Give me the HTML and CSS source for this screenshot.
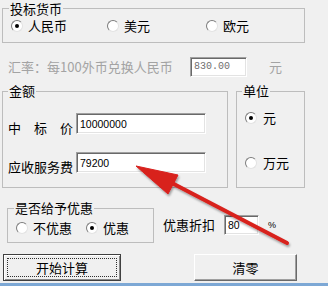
FILE: index.html
```html
<!DOCTYPE html>
<html>
<head>
<meta charset="utf-8">
<link rel="stylesheet" href="styles.css">
</head>
<body>
<div class="dlg">
  <fieldset class="grp cur">
    <legend>投标货币</legend>
    <div class="radios">
      <div class="opt"><span class="radio on"></span>人民币</div>
      <div class="opt"><span class="radio"></span>美元</div>
      <div class="opt"><span class="radio"></span>欧元</div>
    </div>
  </fieldset>

  <div class="rate">
    <span class="rate-lbl">汇率：每100外币兑换人民币</span>
    <span class="box rate-box">830.00</span>
    <span class="rate-unit">元</span>
  </div>

  <div class="mid">
    <fieldset class="grp amt">
      <legend>金额</legend>
      <div class="field f1"><span class="lbl spaced"><span>中</span><span>标</span><span>价</span></span><span class="box num amt-box">10000000</span></div>
      <div class="field f2"><span class="lbl">应收服务费</span><span class="box num amt-box">79200</span></div>
    </fieldset>
    <fieldset class="grp unit">
      <legend>单位</legend>
      <div class="opt u1"><span class="radio on"></span>元</div>
      <div class="opt u2"><span class="radio"></span>万元</div>
    </fieldset>
  </div>

  <div class="disc-row">
    <fieldset class="grp disc">
      <legend>是否给予优惠</legend>
      <div class="radios">
        <div class="opt"><span class="radio"></span>不优惠</div>
        <div class="opt"><span class="radio on"></span>优惠</div>
      </div>
    </fieldset>
    <div class="disc-ctrl">
      <span class="disc-lbl">优惠折扣</span>
      <span class="box num disc-box">80</span>
      <span class="pct">%</span>
    </div>
  </div>

  <div class="btns">
    <button class="btn def"><span class="focus">开始计算</span></button>
    <button class="btn clr">清零</button>
  </div>
  <div class="taskbar"></div>
</div>

<svg class="arrow" width="328" height="286" viewBox="0 0 328 286">
  <defs>
    <filter id="sh" x="-20%" y="-20%" width="140%" height="140%">
      <feDropShadow dx="1" dy="2" stdDeviation="1.2" flood-color="#000" flood-opacity="0.35"/>
    </filter>
  </defs>
  <g filter="url(#sh)" fill="#d8201c" stroke="#d8201c">
    <line x1="170" y1="182" x2="287" y2="243" stroke-width="4" stroke-linecap="round"/>
    <polygon points="136,166 178,175 168,194" stroke-width="1" stroke-linejoin="round"/>
  </g>
</svg>
</body>
</html>
```

FILE: styles.css
```css
* { box-sizing: border-box; }
html, body { margin: 0; padding: 0; }
body {
  width: 328px;
  height: 286px;
  overflow: hidden;
  position: relative;
  background: #f0f0f0;
  color: #000;
  font: 13px/18px "Noto Sans CJK SC", "Noto Sans", sans-serif;
}
.dlg { display: flex; flex-direction: column; align-items: flex-start; }

.grp {
  margin: 0;
  padding: 0;
  min-width: 0;
  border: 1px solid #bdbdbd;
}
.grp legend { padding: 0 1px; line-height: 18px; font-size: 13px; }

.radios { display: flex; align-items: center; height: 18px; }
.opt { display: flex; align-items: center; gap: 5px; white-space: nowrap; height: 18px; }
.radio {
  flex: none;
  width: 12px;
  height: 12px;
  border-radius: 50%;
  background: #fff;
  border: 1px solid;
  border-color: #7c7c7c #e2e2e2 #e2e2e2 #7c7c7c;
  display: flex;
  align-items: center;
  justify-content: center;
}
.radio.on::after {
  content: "";
  width: 4px;
  height: 4px;
  border-radius: 50%;
  background: #000;
}

.box {
  display: flex;
  align-items: center;
  background: #fff;
  border: 1px solid;
  border-color: #a0a0a0 #fff #fff #a0a0a0;
  box-shadow: inset 1px 1px 0 #696969, inset -1px -1px 0 #e3e3e3;
  padding-left: 3px;
  white-space: nowrap;
}
.num { font: 10.5px/12px "Liberation Sans", Arial, sans-serif; }

/* currency group */
.cur { margin: 0 0 0 2px; width: 303px; padding-bottom: 7px; }
.cur legend { margin-left: 6px; line-height: 17px; }
.cur .radios { margin-left: 8px; }
.cur .opt:nth-child(1) { width: 96px; }
.cur .opt:nth-child(2) { width: 99px; }

/* exchange rate */
.rate { display: flex; align-items: center; height: 20px; margin-top: 14px; color: #a3a3a3; }
.rate-lbl { width: 190px; padding-left: 8px; }
.rate-box {
  width: 57px;
  height: 20px;
  color: #707070;
  font: 10px/12px "Liberation Mono", "Courier New", monospace;
}
.rate-unit { margin-left: 22px; }

/* amount + unit */
.mid { display: flex; gap: 8px; margin: 5px 0 0 2px; }
.amt { width: 226px; height: 106px; }
.amt legend { margin-left: 5px; }
.field { display: flex; align-items: flex-end; height: 21px; }
.f1 { margin-top: 13px; }
.f2 { margin-top: 18px; }
.lbl { flex: none; width: 73px; padding-left: 5px; line-height: 16px; margin-bottom: -2px; white-space: nowrap; }
.spaced { display: flex; gap: 13px; }
.amt-box { width: 130px; height: 21px; align-items: flex-start; padding-top: 4px; }

.unit { width: 69px; height: 106px; }
.unit legend { margin-left: 5px; }
.unit .opt { margin-left: 8px; gap: 6px; }
.u1 { margin-top: 9px; }
.u2 { margin-top: 27px; }

/* discount */
.disc-row { display: flex; align-items: flex-start; margin-top: 11px; }
.disc { margin-left: 7px; width: 147px; padding-bottom: 5px; }
.disc legend { margin-left: 6px; }
.disc .radios { margin: 2px 0 0 8px; }
.disc .opt:nth-child(1) { width: 70px; }
.disc-ctrl { display: flex; align-items: center; height: 20px; margin: 16px 0 0 9px; }
.disc-lbl { width: 52px; }
.disc-box { width: 35px; height: 20px; margin-left: 9px; }
.pct { margin-left: 9px; font: 9px/12px "Liberation Sans", Arial, sans-serif; }

/* buttons */
.btns { display: flex; margin-top: 11px; height: 27px; }
.btn {
  margin: 0;
  height: 27px;
  background: #f0f0f0;
  font: 13px/18px "Noto Sans CJK SC", "Noto Sans", sans-serif;
  color: #000;
  padding: 0;
}
.def {
  margin-left: 3px;
  width: 118px;
  border: 1px solid #404040;
  box-shadow: inset 1px 1px 0 #fff, inset -1px -1px 0 #8a8a8a;
  padding: 3px;
}
.focus {
  display: flex;
  align-items: center;
  justify-content: center;
  height: 100%;
  border: 1px dotted #303030;
}
.clr {
  margin-left: 73px;
  width: 103px;
  border: 1px solid;
  border-color: #fff #6a6a6a #6a6a6a #fff;
  box-shadow: inset -1px -1px 0 #a0a0a0;
}
.taskbar { width: 328px; height: 3px; margin-top: 2px; background: #7da8d5; }

.arrow { position: absolute; left: 0; top: 0; pointer-events: none; }
```
